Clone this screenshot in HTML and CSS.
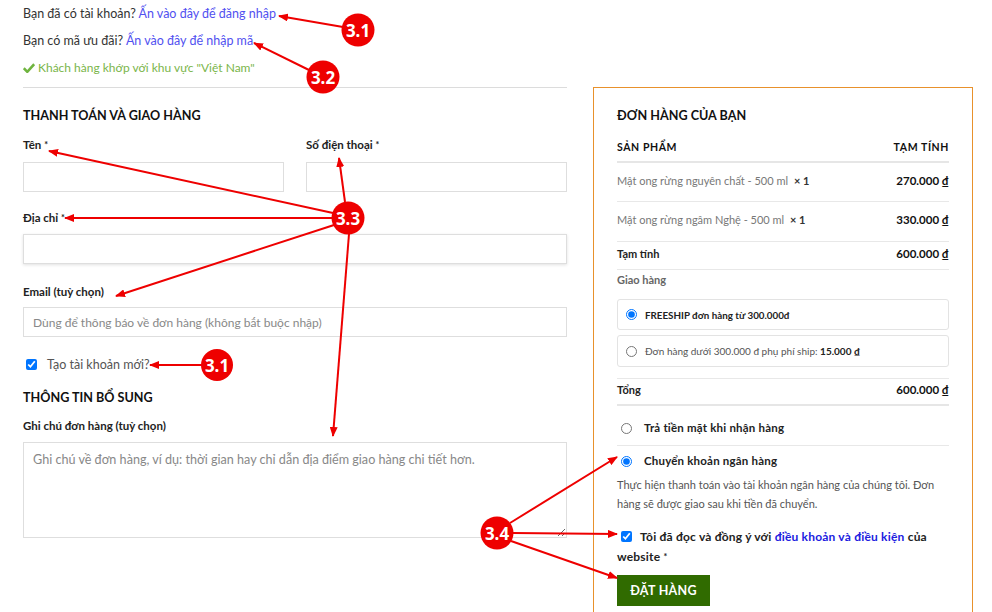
FILE: index.html
```html
<!DOCTYPE html>
<html lang="vi">
<head>
<meta charset="utf-8">
<title>Thanh toán</title>
<link rel="stylesheet" href="styles.css">
</head>
<body>
<div class="page">
  <div class="notices">
    <p class="notice">Bạn đã có tài khoản? <a class="link" href="#">Ấn vào đây để đăng nhập</a></p>
    <p class="notice">Bạn có mã ưu đãi? <a class="link" href="#">Ấn vào đây để nhập mã</a></p>
    <p class="notice ok"><svg class="check" viewBox="0 0 12 10" width="12" height="10"><path d="M0.8 5.2 L4.3 8.8 L11.2 1.2" fill="none" stroke="#6fb43f" stroke-width="2.6"/></svg>Khách hàng khớp với khu vực "Việt Nam"</p>
  </div>

  <div class="checkout">
    <div class="billing">
      <h3 class="title">THANH TOÁN VÀ GIAO HÀNG</h3>
      <div class="pair">
        <div class="field">
          <label class="lbl">Tên <span class="req">*</span></label>
          <input class="inp" type="text">
        </div>
        <div class="field">
          <label class="lbl">Số điện thoại <span class="req">*</span></label>
          <input class="inp" type="text">
        </div>
      </div>
      <div class="field f-addr">
        <label class="lbl">Địa chỉ <span class="req">*</span></label>
        <input class="inp inp-shadow" type="text">
      </div>
      <div class="field f-email">
        <label class="lbl">Email (tuỳ chọn)</label>
        <input class="inp" type="text" placeholder="Dùng để thông báo về đơn hàng (không bắt buộc nhập)">
      </div>
      <label class="create"><input type="checkbox" class="cb" checked><span>Tạo tài khoản mới?</span></label>
      <h3 class="title t2">THÔNG TIN BỔ SUNG</h3>
      <div class="field f-note">
        <label class="lbl">Ghi chú đơn hàng (tuỳ chọn)</label>
        <textarea class="ta" placeholder="Ghi chú về đơn hàng, ví dụ: thời gian hay chỉ dẫn địa điểm giao hàng chi tiết hơn."></textarea>
      </div>
    </div>

    <div class="order">
      <h3 class="title">ĐƠN HÀNG CỦA BẠN</h3>
      <div class="row head"><span>SẢN PHẨM</span><span>TẠM TÍNH</span></div>
      <div class="row item"><span class="pname">Mật ong rừng nguyên chất - 500 ml <b class="qty">× 1</b></span><span class="price">270.000 ₫</span></div>
      <div class="row item i2"><span class="pname">Mật ong rừng ngâm Nghệ - 500 ml <b class="qty">× 1</b></span><span class="price">330.000 ₫</span></div>
      <div class="row sub"><span class="bold">Tạm tính</span><span class="price">600.000 ₫</span></div>
      <div class="ship">
        <div class="ship-t">Giao hàng</div>
        <label class="opt"><input type="radio" name="ship" class="rd" checked><span class="bold fs">FREESHIP đơn hàng từ 300.000đ</span></label>
        <label class="opt o2"><input type="radio" name="ship" class="rd"><span>Đơn hàng dưới 300.000 đ phụ phí ship: <b>15.000 ₫</b></span></label>
      </div>
      <div class="row total"><span class="bold">Tổng</span><span class="price">600.000 ₫</span></div>
      <label class="pay p1"><input type="radio" name="pay" class="rd"><span>Trả tiền mặt khi nhận hàng</span></label>
      <label class="pay p2"><input type="radio" name="pay" class="rd" checked><span>Chuyển khoản ngân hàng</span></label>
      <p class="desc">Thực hiện thanh toán vào tài khoản ngân hàng của chúng tôi. Đơn hàng sẽ được giao sau khi tiền đã chuyển.</p>
      <div class="terms"><input type="checkbox" class="cb" checked><span>Tôi đã đọc và đồng ý với</span> <a class="link2" href="#">điều khoản và điều kiện</a> <span>của</span> <span class="nw">website <span class="req">*</span></span></div>
      <button class="btn" type="button">ĐẶT HÀNG</button>
    </div>
  </div>

  <svg class="annot" width="992" height="612" viewBox="0 0 992 612">
    <defs>
      <marker id="ah" markerWidth="10" markerHeight="8" refX="9" refY="4" orient="auto" markerUnits="userSpaceOnUse">
        <path d="M0 0 L10 4 L0 8 Z" fill="#ee0000"/>
      </marker>
    </defs>
    <g stroke="#ee0000" stroke-width="2" fill="none" marker-end="url(#ah)">
      <line x1="343" y1="27" x2="279" y2="16"/>
      <line x1="309" y1="70" x2="254" y2="43"/>
      <line x1="333" y1="213" x2="49" y2="151"/>
      <line x1="345" y1="202" x2="339" y2="158"/>
      <line x1="332" y1="218" x2="65" y2="218"/>
      <line x1="334" y1="225" x2="116" y2="296"/>
      <line x1="349" y1="234" x2="333" y2="436"/>
      <line x1="202" y1="365" x2="150" y2="365"/>
      <line x1="510" y1="523" x2="617" y2="457"/>
      <line x1="513" y1="533" x2="617" y2="534"/>
      <line x1="511" y1="541" x2="617" y2="578"/>
    </g>
    <g fill="#ee0000">
      <circle cx="358" cy="30" r="16.5"/>
      <circle cx="323" cy="77" r="16.5"/>
      <circle cx="348" cy="218" r="16.5"/>
      <circle cx="217" cy="365" r="16"/>
      <circle cx="497" cy="533" r="16.5"/>
    </g>
    <g class="annot-t" fill="#ffffff" text-anchor="middle">
      <text x="358" y="36.5">3.1</text>
      <text x="323" y="83.5">3.2</text>
      <text x="348" y="224.5">3.3</text>
      <text x="217" y="371.5">3.1</text>
      <text x="497" y="539.5">3.4</text>
    </g>
  </svg>
</div>
</body>
</html>
```

FILE: styles.css
```css
* { box-sizing: border-box; }
html, body { margin: 0; padding: 0; background: #fff; }
body {
  font-family: Lato, "Noto Sans", sans-serif;
  color: #333;
  font-size: 12px;
}
.page {
  position: relative;
  width: 992px;
  height: 612px;
  overflow: hidden;
}
.notices { padding: 0 23px; }
.notice {
  margin: 0;
  line-height: 27px;
  font-size: 12.5px;
  color: #333;
}
.link { color: #5151f0; text-decoration: none; }
.ok { color: #7ab54a; display: flex; align-items: center; gap: 3px; font-size: 12px; }
.check { flex: none; }

.checkout {
  display: grid;
  grid-template-columns: 544px 380px;
  column-gap: 26px;
  margin: 6px 0 0 23px;
  align-items: start;
}
.billing {
  border-top: 1px solid #dcdcdc;
  padding-top: 18px;
}
.title {
  margin: 0;
  font-size: 12.6px;
  font-weight: 700;
  line-height: 20px;
  color: #111;
}
.pair {
  display: grid;
  grid-template-columns: 261px 261px;
  column-gap: 22px;
}
.field { display: flex; flex-direction: column; }
.pair .field { margin-top: 10px; }
.lbl {
  font-size: 11.5px;
  font-weight: 700;
  line-height: 18px;
  color: #222;
  margin-bottom: 8px;
}
.req { font-size: 9px; vertical-align: top; }
.inp {
  height: 30px;
  border: 1px solid #dedede;
  padding: 0 9px;
  font-family: inherit;
  font-size: 12px;
  color: #333;
  outline: none;
  background: #fff;
}
.inp::placeholder, .ta::placeholder { color: #888; }
.inp-shadow { box-shadow: 0 1px 3px rgba(0,0,0,0.12); }
.f-addr { margin-top: 17px; }
.f-addr .lbl { margin-bottom: 7px; }
.f-email { margin-top: 19px; }
.f-email .lbl { margin-bottom: 6px; }
.create {
  display: flex;
  align-items: center;
  gap: 10px;
  margin-top: 17px;
  height: 20px;
  font-size: 12.5px;
  color: #555;
}
.cb { margin: 0 0 0 3px; width: 11px; height: 11px; }
.t2 { margin-top: 14px; }
.f-note { margin-top: 9px; }
.f-note .lbl { margin-bottom: 7px; }
.ta {
  height: 96px;
  border: 1px solid #dedede;
  padding: 9px 9px;
  font-family: inherit;
  font-size: 12.6px;
  resize: vertical;
  outline: none;
}

.order {
  border: 1px solid #e8912c;
  border-bottom: none;
  padding: 18px 23px 40px;
  height: 560px;
}
.row {
  display: flex;
  justify-content: space-between;
  align-items: center;
  line-height: 20px;
}
.head {
  padding: 11px 0 4px;
  border-bottom: 2px solid #e6e6e6;
  font-size: 10.5px;
  font-weight: 700;
  letter-spacing: 0.6px;
  color: #111;
}
.item {
  padding: 8px 0 10px;
  border-bottom: 1px solid #e8e8e8;
}
.i2 { padding-bottom: 11px; }
.pname { font-size: 11px; color: #777; }
.qty { color: #333; font-weight: 700; margin-left: 3px; }
.price { font-size: 11.5px; font-weight: 700; color: #111; }
.bold { font-weight: 700; color: #222; }
.sub {
  padding: 2px 0 5px;
  border-bottom: 1px solid #e8e8e8;
  font-size: 11px;
}
.ship { padding-bottom: 11px; border-bottom: 1px solid #e8e8e8; }
.ship-t { line-height: 20px; font-size: 11px; font-weight: 700; color: #666; margin-bottom: 9px; }
.opt {
  display: flex;
  align-items: center;
  gap: 8px;
  height: 31px;
  padding: 0 8px;
  border: 1px solid #e3e3e3;
  border-radius: 3px;
  font-size: 10px;
  color: #555;
}
.opt .fs { font-size: 9.8px; }
.opt .bold { color: #222; }
.opt b { color: #222; }
.o2 { margin-top: 5px; height: 32px; }
.rd { margin: 0; width: 11px; height: 11px; }
.total {
  padding: 1px 0 4px;
  border-bottom: 2px solid #e6e6e6;
  font-size: 11px;
}
.pay {
  display: flex;
  align-items: center;
  gap: 12px;
  padding-left: 4px;
  line-height: 20px;
  font-size: 11.5px;
  font-weight: 700;
  color: #222;
  letter-spacing: 0.2px;
}
.p1 { padding-top: 12px; padding-bottom: 7px; border-bottom: 1px solid #e8e8e8; }
.p2 { padding-top: 5px; }
.desc {
  margin: 4px 0 0;
  line-height: 19px;
  font-size: 11px;
  color: #555;
}
.terms {
  margin-top: 14px;
  line-height: 20px;
  font-size: 12px;
  font-weight: 700;
  color: #222;
  letter-spacing: 0.2px;
}
.terms .cb { margin: 0 8px 0 4px; vertical-align: -1px; }
.nw { white-space: nowrap; }
.link2 { color: #2020e0; text-decoration: none; }
.btn {
  display: block;
  margin-top: 8px;
  height: 31px;
  width: 93px;
  border: none;
  background: #306b00;
  color: #fff;
  font-family: inherit;
  font-size: 12.5px;
  font-weight: 700;
  letter-spacing: 0.3px;
}

.annot {
  position: absolute;
  left: 0;
  top: 0;
  pointer-events: none;
}
.annot-t {
  font-family: "Noto Sans", "DejaVu Sans", sans-serif;
  font-weight: 700;
  font-size: 17px;
}
```
